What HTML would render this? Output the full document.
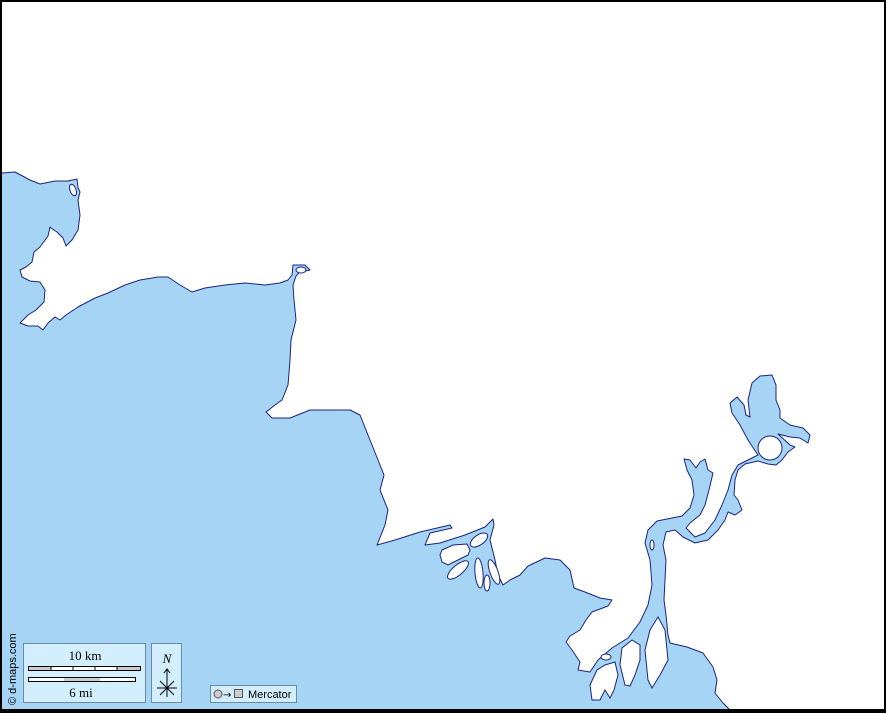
<!DOCTYPE html>
<html><head><meta charset="utf-8"><style>
html,body{margin:0;padding:0;background:#fff}
svg{display:block}
</style></head><body>
<svg width="886" height="713" viewBox="0 0 886 713" xmlns="http://www.w3.org/2000/svg">
<rect x="0" y="0" width="886" height="713" fill="#fff"/>
<g fill="#a6d4f5" stroke="#1a237e" stroke-width="1" stroke-linejoin="round">
<path d="M0,175 L2,173 L15,172 L30,180 L40,184 L55,181 L68,181 L77,179 L78,188 L80,192 L78,200 L80,215 L78,230 L72,240 L66,246 L63,238 L57,232 L51,228 L50,227 L48,236 L40,247 L34,252 L32,262 L26,267 L20,270 L22,277 L30,281 L40,282 L45,290 L44,302 L36,310 L28,315 L20,323 L28,326 L38,326 L43,330 L48,323 L55,317 L60,320 L66,315 L78,307 L95,298 L108,293 L125,285 L140,280 L158,277 L168,277 L180,285 L192,292 L205,288 L225,285 L245,283 L265,285 L280,283 L288,280 L292,275 L293,265 L305,265 L310,270 L300,272 L296,276 L293,285 L294,300 L296,320 L291,340 L290,360 L288,385 L282,400 L275,405 L266,412 L272,418 L290,418 L310,410 L330,410 L350,410 L360,415 L370,440 L378,460 L384,475 L380,490 L388,510 L385,525 L377,545 L395,540 L420,532 L450,525 L452,528 L430,533 L425,545 L440,543 L465,535 L485,527 L493,519 L494,525 L490,540 L495,560 L498,575 L503,585 L510,580 L520,575 L528,566 L545,558 L560,560 L570,570 L574,588 L585,592 L600,598 L612,600 L608,606 L592,612 L586,620 L580,630 L570,636 L566,642 L572,650 L580,662 L578,670 L590,672 L598,660 L612,648 L628,638 L640,622 L648,605 L652,585 L650,560 L645,543 L648,530 L657,521 L667,519 L682,516 L690,508 L694,495 L692,480 L687,470 L684,459 L690,460 L696,468 L700,462 L705,459 L708,470 L713,473 L709,490 L705,505 L700,515 L690,523 L686,528 L695,537 L705,533 L715,520 L722,505 L728,490 L732,475 L738,465 L752,458 L758,455 L748,440 L740,425 L732,413 L730,403 L737,397 L744,405 L746,415 L750,417 L748,400 L752,383 L760,376 L772,375 L776,385 L776,400 L780,410 L780,418 L790,425 L803,428 L810,435 L808,443 L800,438 L790,437 L778,434 L790,445 L795,447 L788,452 L782,460 L776,465 L768,464 L758,461 L745,464 L738,470 L735,480 L734,495 L738,500 L742,510 L735,515 L728,512 L725,520 L718,530 L708,540 L695,543 L683,537 L675,530 L666,532 L663,545 L666,560 L665,580 L664,600 L666,615 L668,635 L670,643 L687,647 L703,653 L713,667 L717,680 L715,693 L723,703 L733,713 L0,713 Z"/>
</g>
<g fill="#fff" stroke="#1a237e" stroke-width="1">
<circle cx="770" cy="448" r="12"/>
<ellipse cx="73" cy="190" rx="3" ry="6" transform="rotate(-20 73 190)"/>
<ellipse cx="301" cy="270" rx="5" ry="3"/>
<path d="M442,550 L453,545 L467,544 L470,550 L468,555 L458,560 L448,565 L442,562 L440,555 Z"/>
<ellipse cx="479" cy="540" rx="10" ry="5" transform="rotate(-35 479 540)"/>
<ellipse cx="458" cy="570" rx="13" ry="5" transform="rotate(-40 458 570)"/>
<ellipse cx="479" cy="573" rx="4" ry="15" transform="rotate(-5 479 573)"/>
<ellipse cx="487" cy="583" rx="3" ry="8"/>
<ellipse cx="494" cy="572" rx="4" ry="13" transform="rotate(-20 494 572)"/>
<ellipse cx="652" cy="545" rx="2" ry="5"/>
<path d="M592,700 L590,685 L597,670 L605,665 L615,662 L618,675 L614,690 L610,698 L605,690 L600,700 Z"/>
<ellipse cx="606" cy="657" rx="5" ry="3"/>
<path d="M625,685 L620,665 L622,648 L632,640 L640,645 L640,660 L635,675 L630,686 Z"/>
<path d="M648,680 L645,650 L650,630 L658,617 L665,630 L668,660 L660,675 L652,688 Z"/>
</g>
<rect x="1" y="1" width="884" height="711" fill="none" stroke="#000" stroke-width="2"/>
<rect x="0" y="709" width="886" height="4" fill="#000"/>
<text transform="translate(16,705) rotate(-90)" font-family="Liberation Sans, sans-serif" font-size="11" fill="#000">© d-maps.com</text>
<rect x="23.5" y="643.5" width="122" height="59" fill="#d3efff" stroke="#6b8ba4"/>
<text x="85" y="660" text-anchor="middle" font-family="Liberation Serif, serif" font-size="13">10 km</text>
<rect x="28.5" y="666.5" width="112" height="4" fill="#fff" stroke="#000"/>
<rect x="29" y="667" width="22" height="3" fill="#ccc"/>
<rect x="117" y="667" width="23" height="3" fill="#ccc"/>
<line x1="51" y1="667" x2="51" y2="670" stroke="#000"/><line x1="73" y1="667" x2="73" y2="670" stroke="#000"/><line x1="95" y1="667" x2="95" y2="670" stroke="#000"/><line x1="117" y1="667" x2="117" y2="670" stroke="#000"/>
<rect x="28.5" y="677.5" width="107" height="4" fill="#fff" stroke="#000"/>
<rect x="64" y="678" width="36" height="3" fill="#ccc"/>
<text x="81" y="697" text-anchor="middle" font-family="Liberation Serif, serif" font-size="13">6 mi</text>
<rect x="151.5" y="643.5" width="30" height="59" fill="#d3efff" stroke="#6b8ba4"/>
<text x="167" y="663" text-anchor="middle" font-family="Liberation Serif, serif" font-style="italic" font-size="13">N</text>
<path d="M167,670 V697 M157,688 H177 M160,681 L174,695 M174,681 L160,695 M164,673 L167,669 L170,673" stroke="#000" stroke-width="1" fill="none"/>
<rect x="210.5" y="685.5" width="86" height="17" fill="#d3efff" stroke="#6b8ba4"/>
<circle cx="218" cy="694" r="4" fill="#ccc" stroke="#555"/>
<text x="223" y="698" font-family="DejaVu Sans, sans-serif" font-size="10">→</text>
<rect x="234.5" y="689.5" width="8" height="8" fill="#ccc" stroke="#555"/>
<text x="248" y="698" font-family="Liberation Sans, sans-serif" font-size="11">Mercator</text>
</svg>
</body></html>
